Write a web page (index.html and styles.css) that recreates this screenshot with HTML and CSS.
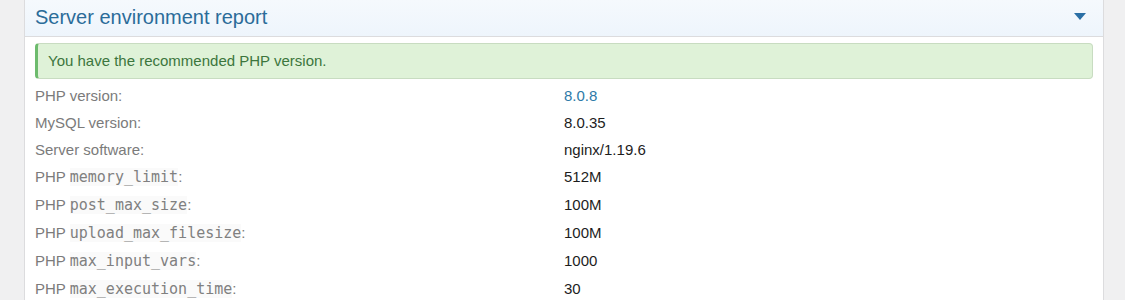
FILE: index.html
```html
<!DOCTYPE html>
<html lang="en">
<head>
    <meta charset="UTF-8">
    <meta name="viewport" content="width=device-width, initial-scale=1.0">
    <title>Server environment report</title>
    <link rel="stylesheet" href="styles.css">
</head>
<body>

    <!-- Панель звіту -->
    <div class="panel">
        <div class="panel-header">
            <h2 class="panel-title">Server environment report</h2>
            <span class="panel-toggle"></span>
        </div>

        <div class="panel-body">
            <div class="notice notice-success">You have the recommended PHP version.</div>

            <table class="env-table">
                <tr>
                    <td class="env-label">PHP version:</td>
                    <td class="env-value env-ok">8.0.8</td>
                </tr>
                <tr>
                    <td class="env-label">MySQL version:</td>
                    <td class="env-value">8.0.35</td>
                </tr>
                <tr>
                    <td class="env-label">Server software:</td>
                    <td class="env-value">nginx/1.19.6</td>
                </tr>
                <tr class="code-row">
                    <td class="env-label">PHP <code>memory_limit</code>:</td>
                    <td class="env-value">512M</td>
                </tr>
                <tr class="code-row">
                    <td class="env-label">PHP <code>post_max_size</code>:</td>
                    <td class="env-value">100M</td>
                </tr>
                <tr class="code-row">
                    <td class="env-label">PHP <code>upload_max_filesize</code>:</td>
                    <td class="env-value">100M</td>
                </tr>
                <tr class="code-row">
                    <td class="env-label">PHP <code>max_input_vars</code>:</td>
                    <td class="env-value">1000</td>
                </tr>
                <tr class="code-row">
                    <td class="env-label">PHP <code>max_execution_time</code>:</td>
                    <td class="env-value">30</td>
                </tr>
            </table>
        </div>
    </div>

</body>
</html>
```

FILE: styles.css
```css
/* Загальні стилі */
body {
    margin: 0;
    padding: 0 21px 0 24px;
    background-color: #f0f0f1;
    font-family: "Liberation Sans", Arial, sans-serif;
    font-size: 15px;
    color: #222;
}

/* Панель */
.panel {
    background-color: #fff;
    border-left: 1px solid #dcdcde;
    border-right: 1px solid #dcdcde;
    min-height: 300px;
}

    .panel-header {
        display: flex;
        align-items: center;
        justify-content: space-between;
        height: 37px;
        padding: 0 17px 0 10px;
        background: linear-gradient(to bottom, #f5f9fd, #eef5fc);
        border-bottom: 1px solid #dcdcde;
        box-sizing: border-box;
    }

    .panel-title {
        margin: 0;
        font-size: 20px;
        font-weight: normal;
        color: #2b6c99;
        line-height: 1;
        padding-bottom: 3px;
    }

    .panel-toggle {
        width: 0;
        height: 0;
        border-left: 6px solid transparent;
        border-right: 6px solid transparent;
        border-top: 7px solid #2a6fa5;
        margin-bottom: 3px;
    }

    .panel-body {
        padding: 6px 10px 0 10px;
    }

/* Повідомлення */
.notice {
    padding: 8px 12px 8px 10px;
    border-radius: 4px;
    line-height: 18px;
}

    .notice-success {
        background-color: #dff2d8;
        border: 1px solid #c8dcc1;
        border-left: 3px solid #6dbb6d;
        color: #3c763d;
    }

/* Таблиця середовища */
.env-table {
    width: 100%;
    border-collapse: collapse;
    margin-top: 3px;
    table-layout: fixed;
}

    .env-table tr {
        height: 27px;
    }

    .env-table tr.code-row {
        height: 28px;
    }

    .env-table td {
        width: 50%;
        padding: 0;
        line-height: 19px;
        vertical-align: middle;
    }

    .env-table tr.code-row td {
        padding-bottom: 2px;
    }

    .env-label {
        color: #7b7b7b;
    }

    .env-value {
        color: #1d1d1d;
    }

    .env-ok {
        color: #2d7aa8;
    }

    .env-label code {
        font-family: "DejaVu Sans Mono", "Liberation Mono", monospace;
        font-size: 15px;
        line-height: 1;
        color: #808080;
        background-color: #fafafa;
    }
```
